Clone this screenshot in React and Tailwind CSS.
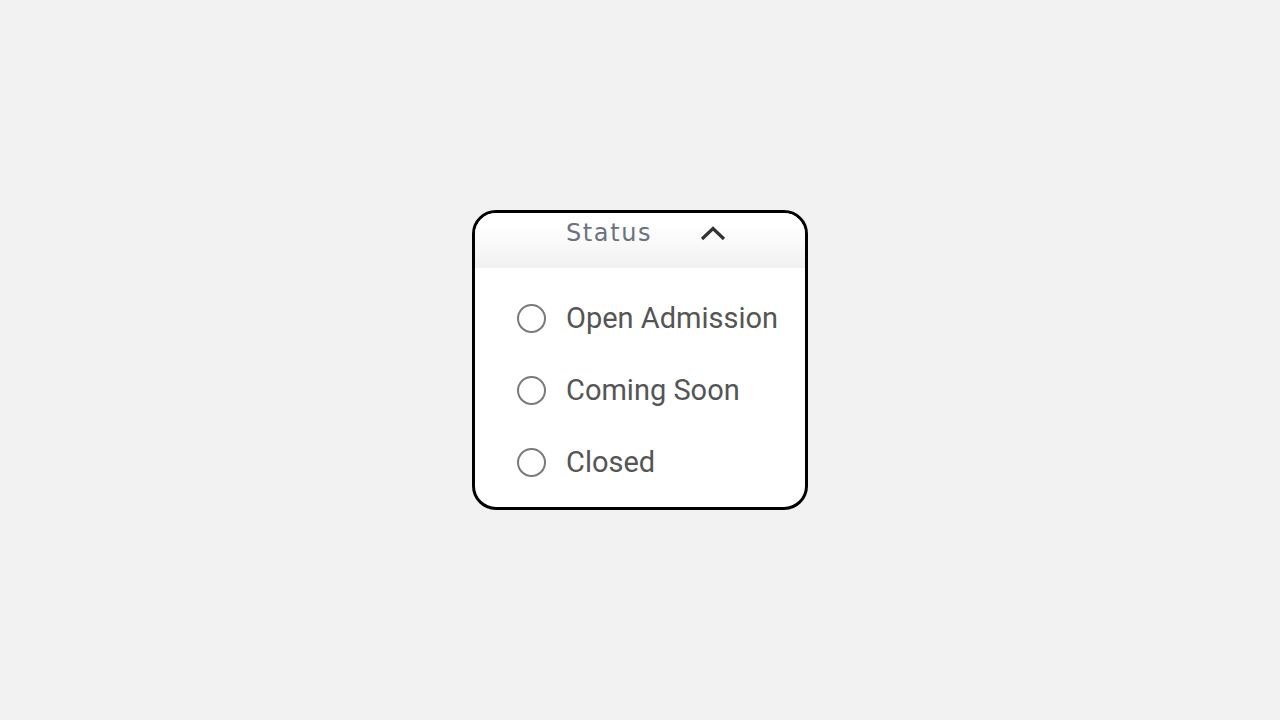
import React, { useState } from 'react';

const options = ['Open Admission', 'Coming Soon', 'Closed'];

const Radio = ({ checked }) => (
  <span className="w-[29px] h-[29px] rounded-full border-2 border-[#7a7a7a] flex items-center justify-center shrink-0">
    {checked && <span className="w-[15px] h-[15px] rounded-full bg-[#555]" />}
  </span>
);

export default function App() {
  const [selected, setSelected] = useState(null);

  return (
    <div className="w-full h-[720px] bg-[#f2f2f2] flex items-center justify-center">
      <div className="w-[336px] h-[300px] bg-white border-[3px] border-black rounded-[24px] overflow-hidden flex flex-col">
        {/* Header */}
        <div className="h-[55px] shrink-0 bg-gradient-to-b from-white from-20% to-[#f1f1f1] flex items-start pt-[6px] pl-[91px]">
          <span className="text-[24px] leading-[28px] tracking-[1.6px] text-[#6b7280] font-['DejaVu_Sans',sans-serif]">
            Status
          </span>
          <svg className="ml-[47px] mt-[2px]" width="28" height="24" viewBox="0 0 28 24" fill="none">
            <path d="M3 18 L14 7.5 L25 18" stroke="#333" strokeWidth="3.2" />
          </svg>
        </div>

        {/* Options */}
        <div className="flex flex-col pl-[42px] pt-[34px] gap-[40px]">
          {options.map((opt) => (
            <button
              key={opt}
              onClick={() => setSelected(opt)}
              className="flex items-center gap-[20px] h-[32px] text-left"
            >
              <Radio checked={selected === opt} />
              <span className="text-[29px] leading-[32px] text-[#555] font-['Roboto',sans-serif]">
                {opt}
              </span>
            </button>
          ))}
        </div>
      </div>
    </div>
  );
}
